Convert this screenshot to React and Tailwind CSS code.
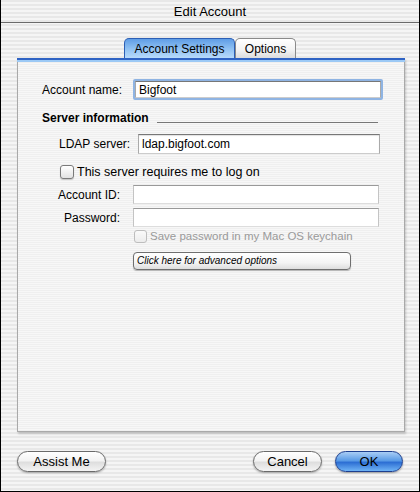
// App.jsx — Aqua "Edit Account" sheet
export default function App() {
  return (
    <div
      className="w-[420px] h-[492px] flex flex-col border-x border-b border-black bg-[repeating-linear-gradient(180deg,#e8e8e8_0px,#e8e8e8_2px,#f5f5f5_2px,#f5f5f5_4px)] text-black"
      style={{ fontFamily: '"Liberation Sans", Arial, sans-serif' }}
    >
      {/* Title bar */}
      <div className="h-[23px] shrink-0 flex items-center justify-center border-b border-[#6b6b6b] text-[13px] leading-none">
        Edit Account
      </div>

      {/* Tabs */}
      <div className="mt-[15px] h-[20px] flex justify-center">
        <div className="w-[111px] h-[20px] flex items-center justify-center rounded-t-[5px] border border-b-0 border-[#2c5fb5] bg-[linear-gradient(180deg,#5f9de6_0%,#8ec0f2_50%,#b7dafb_100%)] text-[12px] leading-none">
          Account Settings
        </div>
        <div className="w-[61px] h-[20px] flex items-center justify-center rounded-t-[5px] border border-b-0 border-[#8a8a8a] bg-[linear-gradient(180deg,#ffffff_0%,#f2f2f2_60%,#dcdcdc_100%)] text-[12px] leading-none">
          Options
        </div>
      </div>

      {/* Panel */}
      <div className="ml-[16px] w-[388px] h-[374px] flex flex-col border-x border-b border-[#a9a9a9] shadow-[1px_2px_2px_rgba(0,0,0,0.18)] bg-[repeating-linear-gradient(180deg,#efefef_0px,#efefef_1px,#f7f7f7_1px,#f7f7f7_2px)]">
        <div className="h-[2px] bg-[#2f63c4] -mx-[1px]" />
        <div className="h-[2px] bg-[#9cc9f5] -mx-[1px]" />

        <div className="flex flex-col text-[12px] leading-none">
          {/* Account name */}
          <div className="mt-[17px] flex items-center pl-[24px]">
            <span className="w-[91px]">Account name:</span>
            <div className="w-[250px] h-[21px] rounded-[2px] border-2 border-[#8fb4e3] bg-white flex items-center">
              <div className="w-full h-full border border-t-[#777] border-x-[#aaa] border-b-[#ccc] flex items-center pl-[3px] text-[12px]">
                Bigfoot
              </div>
            </div>
          </div>

          {/* Server information */}
          <div className="mt-[12px] flex items-center pl-[24px] pr-[26px]">
            <span className="font-bold text-[12px]">Server information</span>
            <div className="ml-[8px] flex-1 h-[1px] bg-[#777] mt-[8px]" />
          </div>

          {/* LDAP server */}
          <div className="mt-[10px] flex items-center pl-[41px]">
            <span className="w-[79px]">LDAP server:</span>
            <div className="w-[242px] h-[20px] border border-t-[#777] border-x-[#aaa] border-b-[#ccc] bg-white shadow-[inset_0_1px_1px_rgba(0,0,0,0.12)] flex items-center pl-[3px] text-[12px]">
              ldap.bigfoot.com
            </div>
          </div>

          {/* Requires log on */}
          <div className="mt-[11px] flex items-center pl-[42px]">
            <span className="w-[14px] h-[14px] rounded-[3px] border border-[#7a7a7a] bg-[linear-gradient(180deg,#ffffff,#e2e2e2)] shadow-[0_1px_1px_rgba(0,0,0,0.2)]" />
            <span className="ml-[3px] text-[12.5px]">This server requires me to log on</span>
          </div>

          {/* Account ID */}
          <div className="mt-[6px] flex items-center">
            <span className="w-[102px] text-right">Account ID:</span>
            <div className="ml-[13px] w-[246px] h-[19px] border border-t-[#999] border-x-[#c4c4c4] border-b-[#ddd] bg-white" />
          </div>

          {/* Password */}
          <div className="mt-[4px] flex items-center">
            <span className="w-[102px] text-right">Password:</span>
            <div className="ml-[13px] w-[246px] h-[19px] border border-t-[#999] border-x-[#c4c4c4] border-b-[#ddd] bg-white" />
          </div>

          {/* Keychain */}
          <div className="mt-[3px] flex items-center pl-[116px]">
            <span className="w-[13px] h-[13px] rounded-[3px] border border-[#bdbdbd] bg-[linear-gradient(180deg,#fafafa,#ececec)]" />
            <span className="ml-[3px] text-[11.5px] text-[#9a9a9a]">Save password in my Mac OS keychain</span>
          </div>

          {/* Advanced options */}
          <div className="mt-[9px] pl-[115px]">
            <div className="w-[218px] h-[18px] rounded-[4px] border border-[#6f6f6f] bg-[linear-gradient(180deg,#ffffff_0%,#f4f4f4_60%,#dedede_100%)] shadow-[0_1px_1px_rgba(0,0,0,0.25)] flex items-center pl-[3px] text-[10px] italic">
              Click here for advanced options
            </div>
          </div>
        </div>
      </div>

      {/* Bottom buttons */}
      <div className="mt-[19px] flex items-center pl-[16px] text-[13px] leading-none">
        <button className="w-[89px] h-[21px] rounded-full border border-[#6a6a6a] bg-[linear-gradient(180deg,#ffffff_0%,#f3f3f3_45%,#dedede_55%,#f4f4f4_100%)] shadow-[0_1px_2px_rgba(0,0,0,0.3)]">
          Assist Me
        </button>
        <button className="ml-[147px] w-[69px] h-[21px] rounded-full border border-[#6a6a6a] bg-[linear-gradient(180deg,#ffffff_0%,#f3f3f3_45%,#dedede_55%,#f4f4f4_100%)] shadow-[0_1px_2px_rgba(0,0,0,0.3)]">
          Cancel
        </button>
        <button className="ml-[13px] w-[68px] h-[21px] rounded-full border border-[#1d3f8f] bg-[linear-gradient(180deg,#a9cdf5_0%,#5a9be6_45%,#2d6fd4_55%,#6fb3f5_100%)] shadow-[0_1px_2px_rgba(0,0,0,0.35)]">
          OK
        </button>
      </div>
    </div>
  );
}
